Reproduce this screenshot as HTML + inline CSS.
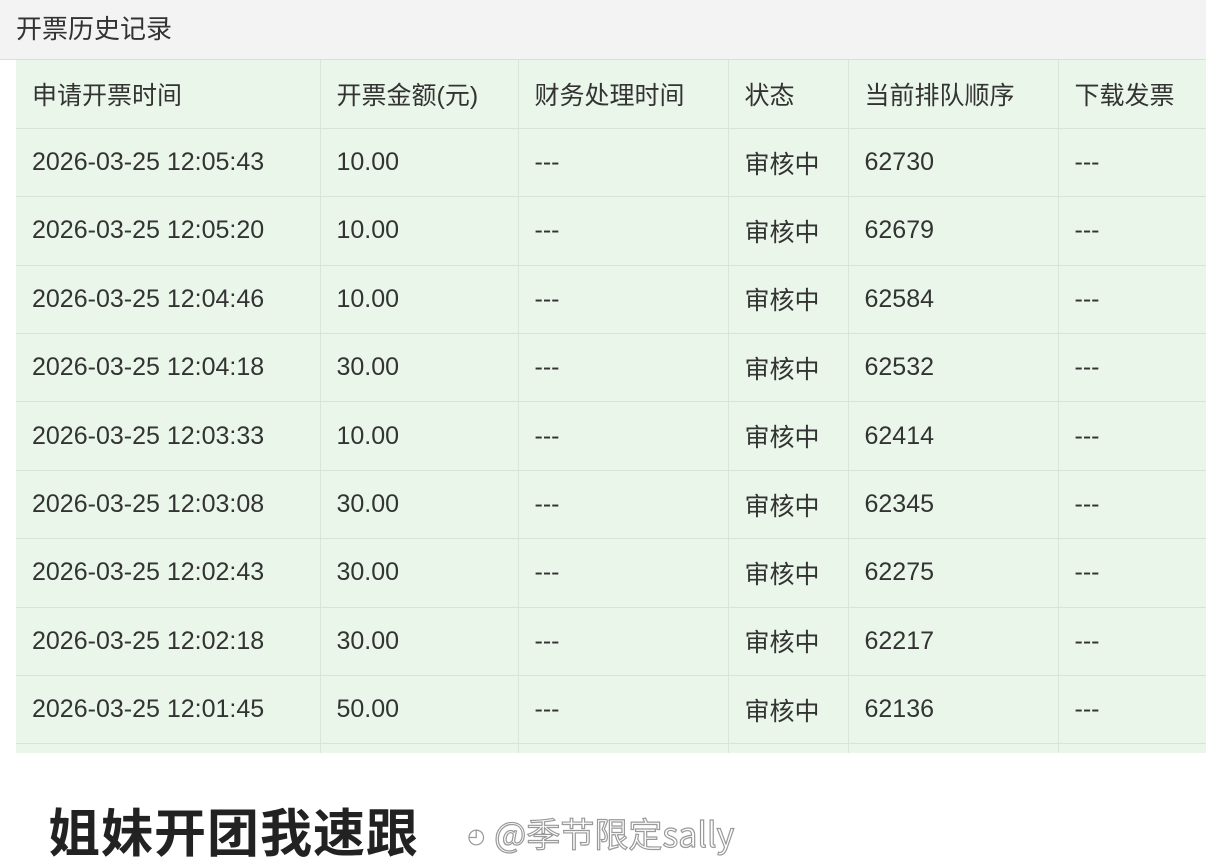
<!DOCTYPE html>
<html><head><meta charset="utf-8"><style>
*{margin:0;padding:0;box-sizing:border-box}
body{width:1206px;height:867px;background:#fff;font-family:"Liberation Sans","Noto Sans CJK SC",sans-serif;color:#333;position:relative;overflow:hidden}
.top{position:absolute;left:0;top:0;width:1206px;height:60px;background:#f3f3f3;border-bottom:1px solid #ddd}
.top span{position:absolute;left:16px;top:9px;font-size:26px;color:#333}
.wrap{position:absolute;left:16px;top:60px;width:1190px;height:693px;overflow:hidden;background:#eaf6ea}
table{border-collapse:collapse;table-layout:fixed;width:1190px}
td{height:68.4px;border-right:1px solid #d9e6d9;border-bottom:1px solid #d6e3d6;font-size:25px;padding-left:16px;white-space:nowrap;vertical-align:middle}
td:last-child{border-right:none}
.cap{position:absolute;left:48px;top:792px;font-size:52px;font-weight:bold;color:#222;letter-spacing:1px;font-family:"Noto Sans CJK SC",sans-serif}
.wm{position:absolute;left:466px;top:808px;font-size:34px;color:#fff;-webkit-text-stroke:1.2px #999;font-family:"Noto Sans CJK SC",sans-serif}
</style></head><body>
<div class="top"><span>开票历史记录</span></div>
<div class="wrap"><table>
<colgroup><col style="width:304px"><col style="width:198px"><col style="width:210px"><col style="width:120px"><col style="width:210px"><col style="width:148px"></colgroup>
<tr><td>申请开票时间</td><td>开票金额(元)</td><td>财务处理时间</td><td>状态</td><td>当前排队顺序</td><td>下载发票</td></tr>
<tr><td>2026-03-25 12:05:43</td><td>10.00</td><td>---</td><td>审核中</td><td>62730</td><td>---</td></tr>
<tr><td>2026-03-25 12:05:20</td><td>10.00</td><td>---</td><td>审核中</td><td>62679</td><td>---</td></tr>
<tr><td>2026-03-25 12:04:46</td><td>10.00</td><td>---</td><td>审核中</td><td>62584</td><td>---</td></tr>
<tr><td>2026-03-25 12:04:18</td><td>30.00</td><td>---</td><td>审核中</td><td>62532</td><td>---</td></tr>
<tr><td>2026-03-25 12:03:33</td><td>10.00</td><td>---</td><td>审核中</td><td>62414</td><td>---</td></tr>
<tr><td>2026-03-25 12:03:08</td><td>30.00</td><td>---</td><td>审核中</td><td>62345</td><td>---</td></tr>
<tr><td>2026-03-25 12:02:43</td><td>30.00</td><td>---</td><td>审核中</td><td>62275</td><td>---</td></tr>
<tr><td>2026-03-25 12:02:18</td><td>30.00</td><td>---</td><td>审核中</td><td>62217</td><td>---</td></tr>
<tr><td>2026-03-25 12:01:45</td><td>50.00</td><td>---</td><td>审核中</td><td>62136</td><td>---</td></tr>
<tr><td></td><td></td><td></td><td></td><td></td><td></td></tr>
</table></div>
<div class="cap">姐妹开团我速跟</div>
<div class="wm">◕ @季节限定sally</div>
</body></html>
